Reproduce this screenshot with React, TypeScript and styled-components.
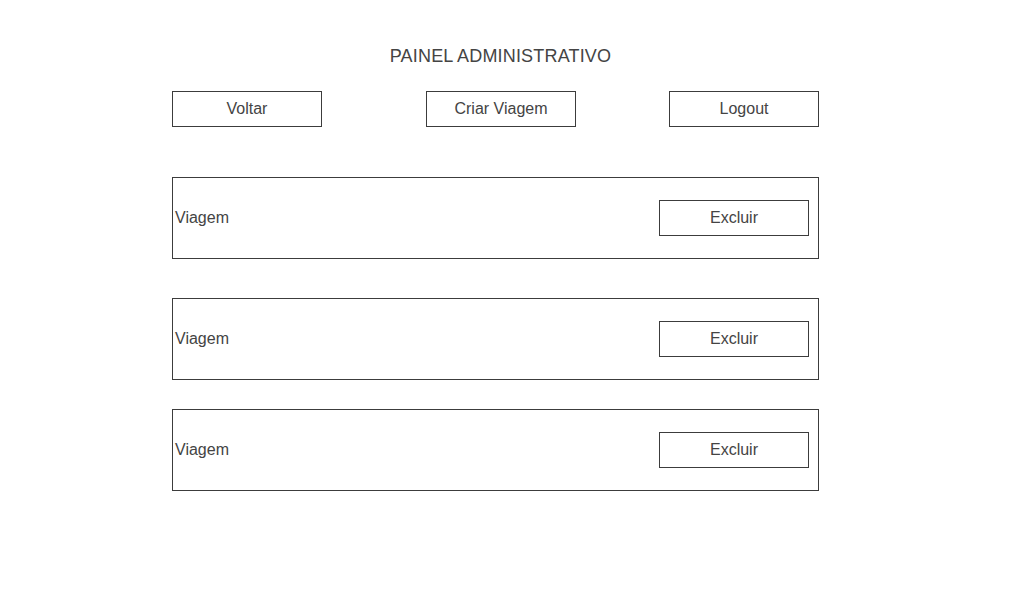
import * as React from 'react'
import styled, { createGlobalStyle } from 'styled-components'

const GlobalStyle = createGlobalStyle`
	html,
	body {
		margin: 0;
		padding: 0;
		background: #ffffff;
	}

	body {
		font-family: 'Liberation Sans', Arial, sans-serif;
		color: #444444;
	}
`

const viagens = [
	{ id: 1, nome: 'Viagem', spacing: 50 },
	{ id: 2, nome: 'Viagem', spacing: 39 },
	{ id: 3, nome: 'Viagem', spacing: 29 },
]

export default function App(): JSX.Element {
	return (
		<>
			<GlobalStyle />
			<Page>
				<Title>PAINEL ADMINISTRATIVO</Title>
				<Toolbar>
					<Button>Voltar</Button>
					<CenterButton>Criar Viagem</CenterButton>
					<Button>Logout</Button>
				</Toolbar>
				<TripList>
					{viagens.map((viagem) => (
						<TripCard key={viagem.id} $spacing={viagem.spacing}>
							<TripName>{viagem.nome}</TripName>
							<Button>Excluir</Button>
						</TripCard>
					))}
				</TripList>
			</Page>
		</>
	)
}

const Page = styled.main`
	width: 647px;
	margin-left: 172px;
	padding-top: 46px;
	padding-bottom: 100px;
`

const Title = styled.h1`
	margin: 0 0 24px;
	padding-left: 10px;
	font-size: 18px;
	font-weight: normal;
	line-height: 21px;
	letter-spacing: 0.18px;
	text-align: center;
	color: #444444;
`

const Toolbar = styled.div`
	display: flex;
	justify-content: space-between;
	align-items: center;
`

const Button = styled.button`
	display: flex;
	align-items: center;
	justify-content: center;
	box-sizing: border-box;
	width: 150px;
	height: 36px;
	padding: 0;
	background: #ffffff;
	border: 1px solid #3c3c3c;
	border-radius: 0;
	font-family: 'Liberation Sans', Arial, sans-serif;
	font-size: 16px;
	color: #444444;
	cursor: pointer;
`

const CenterButton = styled(Button)`
	margin-left: 11px;
`

const TripList = styled.section`
	display: flex;
	flex-direction: column;
`

const TripCard = styled.div<{ $spacing: number }>`
	display: flex;
	align-items: center;
	justify-content: space-between;
	box-sizing: border-box;
	height: 82px;
	margin-top: ${(p) => p.$spacing}px;
	padding: 0 9px 0 2px;
	border: 1px solid #3c3c3c;
`

const TripName = styled.span`
	font-size: 16px;
	color: #444444;
`
